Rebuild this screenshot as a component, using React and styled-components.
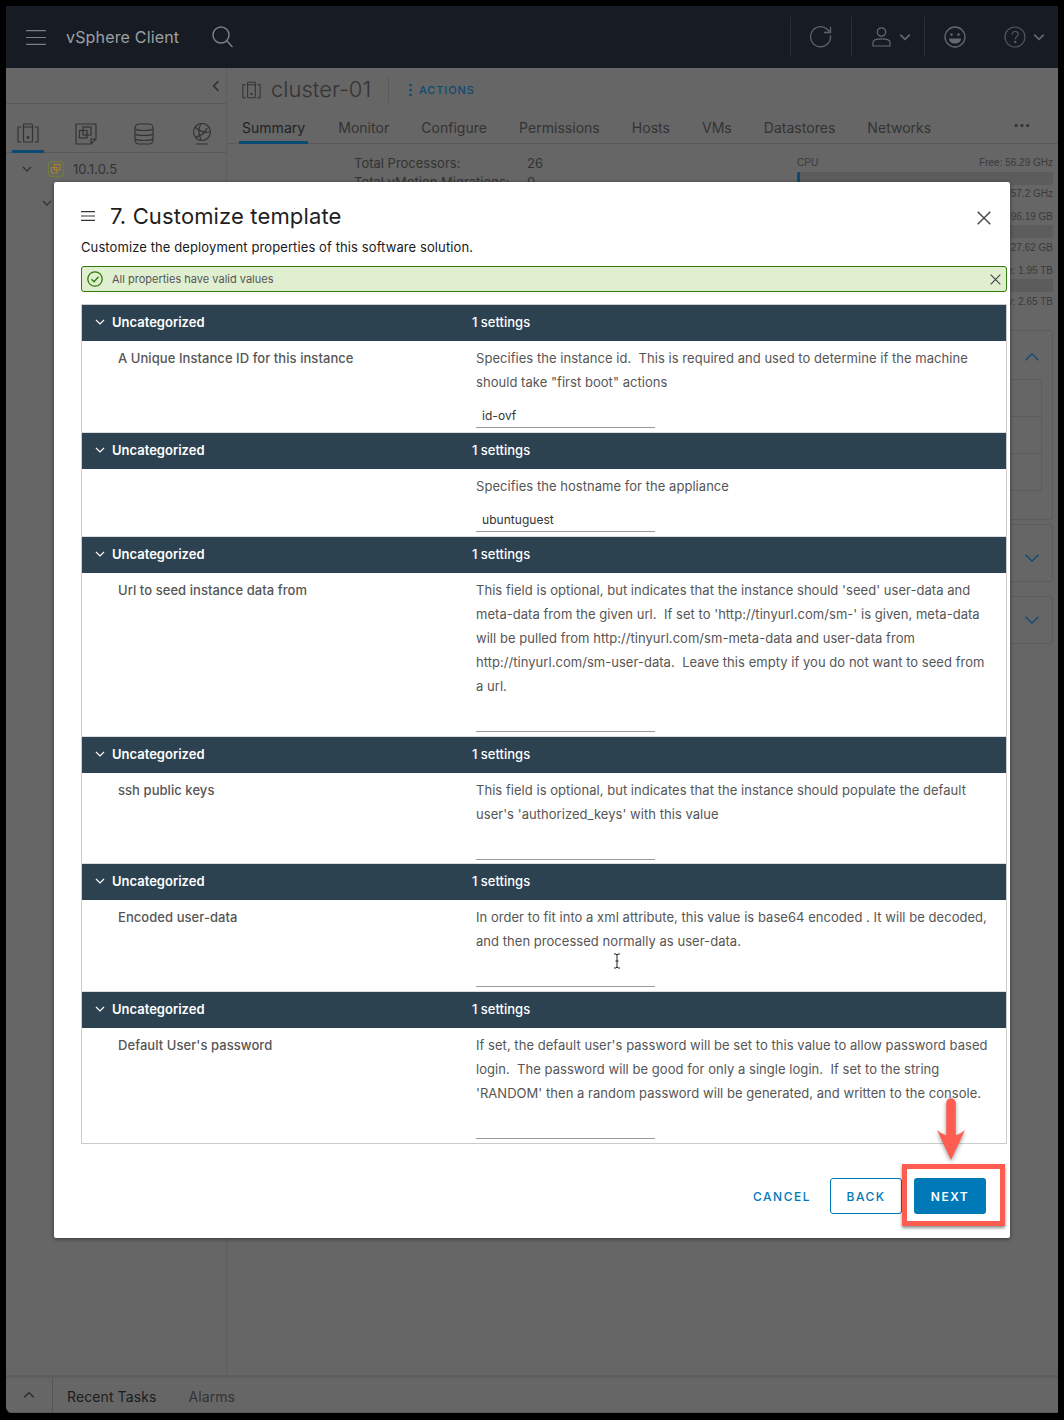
import React from "react";
import styled, { createGlobalStyle } from "styled-components";

const Global = createGlobalStyle`
  html, body { margin: 0; padding: 0; background: #000; }
  body { font-family: "Inter", "Noto Sans", sans-serif; }
  * { box-sizing: border-box; }
`;

const Page = styled.div`
  width: 1064px; height: 1420px; padding: 6px 6px 7px 6px; background: #000;
`;
const Shell = styled.div`
  position: relative; width: 1052px; height: 1407px; background: #666;
  display: flex; flex-direction: column; overflow: hidden; border-bottom-left-radius: 6px;
`;
const TopBar = styled.header`
  height: 62px; flex: none; background: #171c24; display: flex; align-items: center;
  padding-left: 20px; color: #9a9d9f;
`;
const Brand = styled.div`
  font-size: 16px; margin-left: 20px; margin-right: 33px; color: #9da0a2; letter-spacing: 0.17px;
`;
const TopRight = styled.div`
  margin-left: auto; display: flex; height: 40px; align-items: center;
`;
const TopCell = styled.div`
  height: 40px; display: flex; align-items: center; justify-content: flex-start;
  width: ${p => p.$w}px; padding-left: ${p => p.$pl}px; gap: ${p => p.$gap || 0}px;
  border-left: ${p => (p.$line ? "1px solid #2a2f36" : "none")};
`;
const Body = styled.div`
  flex: 1; display: flex; min-height: 0;
`;
const Side = styled.aside`
  width: 221px; flex: none; border-right: 1px solid #5e5e5e; display: flex; flex-direction: column;
`;
const CollapseRow = styled.div`
  height: 36px; flex: none; border-bottom: 1px solid #595959; display: flex; align-items: center;
  justify-content: flex-end; padding-right: 4px;
`;
const NavIcons = styled.div`
  height: 49px; flex: none; border-bottom: 1px solid #595959; display: flex; align-items: flex-end;
`;
const NavIcon = styled.div`
  width: 32px; height: 36px; margin-left: ${p => p.$ml}px; display: flex;
  justify-content: center; align-items: flex-start; padding-top: 6px;
  border-bottom: 3px solid ${p => (p.$active ? "#0b4a72" : "transparent")};
  margin-bottom: -1px;
`;
const TreeRow = styled.div`
  display: flex; align-items: center; height: 32px; padding-left: ${p => p.$indent}px; gap: 16px;
  margin-top: ${p => p.$mt || 0}px; font-size: 13px; color: #333;
`;
const TreeLabel = styled.span`
  margin-left: -7px; letter-spacing: 0.03px;
`;
const Main = styled.main`
  flex: 1; min-width: 0; display: flex; flex-direction: column;
`;
const ObjectHead = styled.div`
  height: 44px; flex: none; display: flex; align-items: center; padding: 0 0 0 15px;
`;
const ObjectName = styled.div`
  font-size: 22px; color: #333; margin-left: 10px; width: 117px; font-weight: 300; margin-top: -2px;
`;
const HeadRule = styled.div`
  width: 1px; height: 26px; background: #595959;
`;
const Actions = styled.div`
  margin-left: 20px; display: flex; align-items: center; gap: 7px; color: #0c4a72;
  font-size: 11px; font-weight: 500; letter-spacing: 0.9px;
`;
const Tabs = styled.nav`
  height: 32px; flex: none; display: flex; border-bottom: 1px solid #595959; position: relative;
  padding-left: 12px; align-items: stretch;
`;
const Tab = styled.div`
  font-size: 14px; color: ${p => (p.$active ? "#222" : "#333")}; margin-left: ${p => p.$ml}px;
  padding: 7px 3px 0; height: 32px; letter-spacing: 0.03px;
  border-bottom: 3px solid ${p => (p.$active ? "#0b4a72" : "transparent")};
`;
const MoreDots = styled.div`
  position: absolute; right: 27px; top: 6px; font-size: 10px; letter-spacing: 1px; color: #333; font-weight: 700;
`;
const Content = styled.div`
  flex: 1; display: flex; padding-top: 10px;
`;
const Facts = styled.div`
  width: 570px; padding-left: 127px; flex: none; font-size: 13px; color: #333;
`;
const Fact = styled.div`
  display: flex; height: 19px; line-height: 19px;
  span:first-child { width: 173px; }
`;
const Meters = styled.div`
  width: 256px; flex: none; margin-top: 1px; font-family: "Liberation Sans", Arial, sans-serif; font-size: 10px; color: #3a3a3a;
`;
const MeterHead = styled.div`
  display: flex; justify-content: space-between; height: 14px; line-height: 16px;
`;
const MeterBar = styled.div`
  height: 13px; background: #5c5c5c; border-radius: 2px; overflow: hidden;
  margin-top: ${p => p.$mt || 0}px; margin-bottom: ${p => p.$mb || 0}px;
`;
const MeterFill = styled.div`
  width: 3px; height: 100%; background: #0b4a72;
`;
const MeterNote = styled.div`
  text-align: right; height: ${p => p.$h}px; line-height: 18px;
`;
const Cards = styled.div`
  position: absolute; left: 790px; right: 5px; top: 324px; display: flex; flex-direction: column; gap: 4px;
`;
const CardBox = styled.div`
  height: ${p => p.$h}px; border: 1px solid #5c5c5c; border-radius: 3px; position: relative; margin-bottom: ${p => p.$mb || 0}px;
`;
const CardChevron = styled.div`
  position: absolute; right: 12px; top: ${p => p.$t}px; line-height: 0;
`;
const CardTable = styled.div`
  position: absolute; right: 10px; left: 0; top: 48px; height: 112px; border: 1px solid #5c5c5c;
  display: grid; grid-template-rows: 37px 37px 1fr;
  div { border-bottom: 1px solid #5c5c5c; }
  div:last-child { border-bottom: 0; }
`;
const BottomBar = styled.footer`
  height: 38px; flex: none; border-top: 3px solid #5e5e5e; border-bottom: 1px solid #595959; display: flex; align-items: center;
  font-size: 14px; color: #222; letter-spacing: 0.1px;
`;
const BottomToggle = styled.div`
  width: 47px; height: 100%; display: flex; justify-content: center; align-items: center; border-right: 1px solid #555;
`;
const BottomTab = styled.div`
  margin-left: ${p => p.$ml}px; color: ${p => p.$c}; padding-top: 2px;
`;

const Modal = styled.section`
  position: absolute; left: 48px; top: 176px; width: 956px; height: 1056px; background: #fff;
  border-radius: 2px; box-shadow: 0 1px 4px rgba(0,0,0,.45);
  padding: 0 3px 0 27px; display: flex; flex-direction: column;
`;
const ModalHead = styled.div`
  height: 50px; flex: none; padding-top: 17px; display: flex; align-items: center; position: relative;
`;
const Title = styled.h2`
  margin: 0 0 0 15px; font-size: 22px; font-weight: 400; color: #1e1e1e; line-height: 30px; letter-spacing: 0.14px;
`;
const CloseBtn = styled.div`
  position: absolute; right: 16px; top: 29px; line-height: 0;
`;
const Sub = styled.p`
  margin: 0; height: 34px; padding-top: 7px; font-size: 13px; line-height: 16px; color: #1a1a1a; letter-spacing: 0.1px;
`;
const Alert = styled.div`
  height: 26px; flex: none; background: #dfefcf; border: 1px solid #2f7a0a; border-radius: 3px; display: flex; align-items: center;
  padding: 0 5px 0 5px; font-size: 11px; color: #555;
  span { margin-left: 9px; }
  svg:last-child { margin-left: auto; }
`;
const Table = styled.div`
  margin-top: 12px; height: 840px; flex: none; border: 1px solid #ccc; display: flex; flex-direction: column;
`;
const SectionHead = styled.div`
  height: 36px; flex: none; background: #2c4251; color: #fff; display: flex; align-items: center;
  font-size: 13px; font-weight: 600; padding: 0 0 2px 13px;
`;
const SectionName = styled.div`
  width: 360px; margin-left: 7px; white-space: nowrap;
`;
const SectionCount = styled.div`
  font-weight: 500;
`;
const Row = styled.div`
  display: flex; flex: none; padding: 5px 0 ${p => p.$pb}px 36px; border-bottom: ${p => (p.$last ? "0" : "1px solid #ddd")};
  font-size: 13px; line-height: 24px; color: #565656; letter-spacing: 0.04px;
`;
const RowLabel = styled.div`
  width: 358px; flex: none; font-weight: 500; letter-spacing: 0.06px;
`;
const RowBody = styled.div`
  flex: 1; min-width: 0;
`;
const DescLine = styled.div`
  white-space: pre; height: 24px;
`;
const Field = styled.div`
  height: 34px; width: 179px; border-bottom: 1px solid #9a9a9a; padding: 10px 0 0 6px; color: #333;
  line-height: 24px; font-size: 12px; white-space: nowrap;
`;
const ModalFoot = styled.div`
  margin-top: 34px; display: flex; align-items: center; justify-content: flex-end; padding-right: 21px; gap: 12px;
`;
const BaseBtn = styled.div`
  height: 36px; width: 72px; border-radius: 3px; display: flex; align-items: center; justify-content: center;
  font-size: 12px; font-weight: 500; letter-spacing: 1.5px;
`;
const GhostBtn = styled(BaseBtn)`
  color: #0079b8; width: auto; margin-right: 7px;
`;
const OutlineBtn = styled(BaseBtn)`
  color: #0079b8; border: 1px solid #0079b8; background: #fff;
`;
const SolidBtn = styled(BaseBtn)`
  color: #fff; background: #0079b8; font-weight: 600;
`;
const CalloutBox = styled.div`
  position: absolute; left: 848px; top: 982px; width: 103px; height: 62px; border: 5px solid #fd5c50;
  box-shadow: 0 2px 3px rgba(0,0,0,.45);
`;
const CalloutArrow = styled.svg`
  position: absolute; left: 882px; top: 915px; filter: drop-shadow(0 2px 2px rgba(0,0,0,.4));
`;
const Beam = styled.svg`
  position: absolute; left: 559px; top: 771px;
`;

const Svg = ({ w, h, c, sw = 1.4, vb, children }) => (
  <svg width={w} height={h} viewBox={vb || `0 0 ${w} ${h}`} fill="none" stroke={c} strokeWidth={sw} style={{ flex: "none", display: "block" }}>
    {children}
  </svg>
);
const Chevron = ({ dir = "down", size = 10, c = "#999", sw = 1.3 }) => {
  const d = { down: "M1 3l4 4 4-4", up: "M1 7l4-4 4 4", left: "M7 1L3 5l4 4" }[dir];
  return <Svg w={size} h={size} vb="0 0 10 10" c={c} sw={sw}><path d={d} /></Svg>;
};
const X = ({ s, c, sw = 1.4 }) => <Svg w={s} h={s} c={c} sw={sw}><path d={`M.7.7L${s - .7} ${s - .7}M${s - .7} .7L.7 ${s - .7}`} /></Svg>;
const Burger = ({ w, h, c, sw }) => <Svg w={w} h={h} c={c} sw={sw}><path d={`M0 ${sw / 2}H${w}M0 ${h / 2}H${w}M0 ${h - sw / 2}H${w}`} /></Svg>;
const ClusterIcon = ({ w = 22, h = 20, c = "#333" }) => (
  <Svg w={w} h={h} vb="0 0 22 20" c={c} sw={1.2}>
    <path d="M4.500 4H1v15h3.500M17.500 4H21v15h-3.500" />
    <rect x="6.500" y="1" width="9" height="18" rx="1" />
    <path d="M6.500 4h9" />
    <circle cx="11" cy="14.500" r=".8" fill={c} />
  </Svg>
);
const sections = [
  { label: "A Unique Instance ID for this instance", pb: 4, value: "id-ovf", lines: ["Specifies the instance id.  This is required and used to determine if the machine", "should take \"first boot\" actions"] },
  { label: "", pb: 4, value: "ubuntuguest", lines: ["Specifies the hostname for the appliance"] },
  { label: "Url to seed instance data from", pb: 4, value: "", lines: ["This field is optional, but indicates that the instance should 'seed' user-data and", "meta-data from the given url.  If set to 'http://tinyurl.com/sm-' is given, meta-data", "will be pulled from http://tinyurl.com/sm-meta-data and user-data from", "http://tinyurl.com/sm-user-data.  Leave this empty if you do not want to seed from", "a url."] },
  { label: "ssh public keys", pb: 3, value: "", lines: ["This field is optional, but indicates that the instance should populate the default", "user's 'authorized_keys' with this value"] },
  { label: "Encoded user-data", pb: 4, value: "", lines: ["In order to fit into a xml attribute, this value is base64 encoded . It will be decoded,", "and then processed normally as user-data."] },
  { label: "Default User's password", pb: 4, last: true, value: "", lines: ["If set, the default user's password will be set to this value to allow password based", "login.  The password will be good for only a single login.  If set to the string", "'RANDOM' then a random password will be generated, and written to the console."] },
];

export default function App() {
  return (
    <Page>
      <Global />
      <Shell>
        <TopBar>
          <Burger w={20} h={15} c="#7c7f82" sw={1.2} />
          <Brand>vSphere Client</Brand>
          <Svg w={21} h={22} c="#7c7f82" sw={1.5}><circle cx="9" cy="9" r="8" /><path d="M14.500 14.500L20.500 21" /></Svg>
          <TopRight>
            <TopCell $w={61} $pl={19} $line>
              <Svg w={22} h={22} c="#5f6265" sw={1.3}><path d="M20.500 9.500A10 10 0 1 1 17.500 3.500L20.500 6.500M20.500 .7V6.500H14" /></Svg>
            </TopCell>
            <TopCell $w={73} $pl={20} $gap={8} $line>
              <Svg w={19} h={20} c="#65686b" sw={1.2}><circle cx="9.500" cy="5" r="4.200" /><path d="M1 19v-3.500c0-2 2.500-3.700 8.500-3.700s8.500 1.700 8.500 3.700V19z" /></Svg>
              <Chevron size={12} c="#65686b" />
            </TopCell>
            <TopCell $w={60} $pl={19} $line>
              <Svg w={22} h={22} c="#66696c" sw={1.3}>
                <circle cx="11" cy="11" r="10" />
                <circle cx="7.500" cy="8.500" r="1.200" fill="#66696c" stroke="none" />
                <circle cx="14.500" cy="8.500" r="1.200" fill="#66696c" stroke="none" />
                <path d="M5 12.500h12c0 3-2.500 5-6 5s-6-2-6-5z" fill="#66696c" stroke="none" />
              </Svg>
            </TopCell>
            <TopCell $w={74} $pl={20} $gap={7}>
              <Svg w={22} h={22} c="#55585b" sw={1.2}>
                <circle cx="11" cy="11" r="10" />
                <path d="M8 8.500c0-2 1.400-3 3.200-3s3 1.200 3 2.800c0 2.300-3 2.400-3 5" />
                <circle cx="11.200" cy="16" r=".7" fill="#55585b" />
              </Svg>
              <Chevron size={12} c="#65686b" />
            </TopCell>
          </TopRight>
        </TopBar>
        <Body>
          <Side>
            <CollapseRow><Chevron dir="left" size={12} c="#333" sw={1.4} /></CollapseRow>
            <NavIcons>
              <NavIcon $ml={6} $active><ClusterIcon w={22} h={20} /></NavIcon>
              <NavIcon $ml={26}>
                <Svg w={22} h={22} c="#333" sw={1.2}><path d="M1 1h20v15l-5 5H1zM21 16h-5v5" /><rect x="8" y="4" width="8" height="8" /><rect x="4.500" y="7.500" width="7.500" height="7.500" /></Svg>
              </NavIcon>
              <NavIcon $ml={26}>
                <Svg w={20} h={22} c="#333" sw={1.2}><rect x="1" y="1" width="18" height="20" rx="4" /><path d="M1 6c3 2 15 2 18 0M1 11c3 2 15 2 18 0M1 16c3 2 15 2 18 0" /></Svg>
              </NavIcon>
              <NavIcon $ml={26}>
                <Svg w={20} h={22} c="#333" sw={1.2}><circle cx="10" cy="9" r="8.500" /><path d="M3 4c4 4 9 6 15 5M9 1c-3 4-3 9 0 16M4 14c4-1 9-3 11-9M4 21h12" /></Svg>
              </NavIcon>
            </NavIcons>
            <TreeRow $indent={16}>
              <Chevron size={10} c="#333" />
              <Svg w={16} h={16} c="#6f7d3a" sw={1.1}>
                <rect x=".6" y=".6" width="14.800" height="14.800" rx="3" />
                <rect x="6.500" y="3.500" width="5.500" height="5.500" stroke="#a9802c" />
                <rect x="3.500" y="6.500" width="5.500" height="5.500" stroke="#a9802c" />
              </Svg>
              <TreeLabel>10.1.0.5</TreeLabel>
            </TreeRow>
            <TreeRow $indent={36} $mt={2}>
              <Chevron size={10} c="#333" />
            </TreeRow>
          </Side>
          <Main>
            <ObjectHead>
              <ClusterIcon w={19} h={18} />
              <ObjectName>cluster-01</ObjectName>
              <HeadRule />
              <Actions>
                <Svg w={3} h={14} c="#0c4a72" sw={0}>
                  <circle cx="1.500" cy="2" r="1.300" fill="#0c4a72" />
                  <circle cx="1.500" cy="7" r="1.300" fill="#0c4a72" />
                  <circle cx="1.500" cy="12" r="1.300" fill="#0c4a72" />
                </Svg>
                ACTIONS
              </Actions>
            </ObjectHead>
            <Tabs>
              <Tab $active $ml={0}>Summary</Tab>
              <Tab $ml={27}>Monitor</Tab>
              <Tab $ml={26}>Configure</Tab>
              <Tab $ml={26}>Permissions</Tab>
              <Tab $ml={26}>Hosts</Tab>
              <Tab $ml={26}>VMs</Tab>
              <Tab $ml={26}>Datastores</Tab>
              <Tab $ml={26}>Networks</Tab>
              <MoreDots>•••</MoreDots>
            </Tabs>
            <Content>
              <Facts>
                <Fact><span>Total Processors:</span><span>26</span></Fact>
                <Fact><span>Total vMotion Migrations:</span><span>0</span></Fact>
              </Facts>
              <Meters>
                <MeterHead><span>CPU</span><span>Free: 56.29 GHz</span></MeterHead>
                <MeterBar $mt={3}><MeterFill /></MeterBar>
                <MeterNote $h={23}>Capacity: 57.2 GHz</MeterNote>
                <MeterNote $h={17}>Free: 96.19 GB</MeterNote>
                <MeterBar $mb={1}><MeterFill /></MeterBar>
                <MeterNote $h={23}>Used: 27.62 GB</MeterNote>
                <MeterNote $h={17}>Free: 1.95 TB</MeterNote>
                <MeterBar $mb={1}><MeterFill /></MeterBar>
                <MeterNote $h={16}>Capacity: 2.65 TB</MeterNote>
              </Meters>
            </Content>
          </Main>
        </Body>
        <BottomBar>
          <BottomToggle><Chevron dir="up" size={12} c="#333" /></BottomToggle>
          <BottomTab $ml={14} $c="#1c1c1c">Recent Tasks</BottomTab>
          <BottomTab $ml={32} $c="#333">Alarms</BottomTab>
        </BottomBar>

        <Cards>
          <CardBox $h={190}>
            <CardChevron $t={18}><Chevron dir="up" size={16} c="#0b4a72" sw={.8} /></CardChevron>
            <CardTable><div /><div /><div /></CardTable>
          </CardBox>
          <CardBox $h={58} $mb={10}>
            <CardChevron $t={25}><Chevron size={16} c="#0b4a72" sw={.8} /></CardChevron>
          </CardBox>
          <CardBox $h={48}>
            <CardChevron $t={15}><Chevron size={16} c="#0b4a72" sw={.8} /></CardChevron>
          </CardBox>
        </Cards>

        <Modal>
          <ModalHead>
            <Burger w={14} h={10} c="#333" sw={1.2} />
            <Title>7. Customize template</Title>
            <CloseBtn><X s={14} c="#444" /></CloseBtn>
          </ModalHead>
          <Sub>Customize the deployment properties of this software solution.</Sub>
          <Alert>
            <Svg w={16} h={16} c="#2f7a0a" sw={1.3}><circle cx="8" cy="8" r="7.200" /><path d="M4.500 8.300l2.500 2.500 4.500-5" /></Svg>
            <span>All properties have valid values</span>
            <X s={11} c="#444" sw={1.2} />
          </Alert>
          <Table>
            {sections.map((s, i) => (
              <React.Fragment key={i}>
                <SectionHead>
                  <Chevron size={10} c="#fff" sw={1.2} />
                  <SectionName>Uncategorized</SectionName>
                  <SectionCount>1 settings</SectionCount>
                </SectionHead>
                <Row $pb={s.pb} $last={s.last}>
                  <RowLabel>{s.label}</RowLabel>
                  <RowBody>
                    {s.lines.map((l, j) => <DescLine key={j}>{l}</DescLine>)}
                    <Field>{s.value}</Field>
                  </RowBody>
                </Row>
              </React.Fragment>
            ))}
          </Table>
          <ModalFoot>
            <GhostBtn>CANCEL</GhostBtn>
            <OutlineBtn>BACK</OutlineBtn>
            <SolidBtn>NEXT</SolidBtn>
          </ModalFoot>
          <Beam width="8" height="16" viewBox="0 0 8 16" fill="none" stroke="#222" strokeWidth="1">
            <path d="M1 1h2l1 1 1-1h2M4 2v12M1 15h2l1-1 1 1h2M2.500 8h3" />
          </Beam>
          <CalloutArrow width="30" height="64" viewBox="0 0 30 64">
            <path d="M15 6v34" stroke="#fd5c50" strokeWidth="9.500" strokeLinecap="round" fill="none" />
            <path d="M1 33c5 4 9 6 14 6s9-2 14-6L15 63z" fill="#fd5c50" />
          </CalloutArrow>
          <CalloutBox />
        </Modal>
      </Shell>
    </Page>
  );
}
